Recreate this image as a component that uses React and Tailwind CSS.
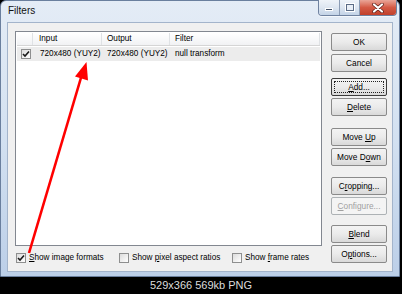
import React from "react";

function Btn({ children, disabled, focused, className = "" }) {
  return (
    <div
      className={
        "relative h-[18px] w-[56px] flex items-center justify-center rounded-[2px] border bg-gradient-to-b text-[8.3px] leading-none whitespace-nowrap " +
        (disabled
          ? "border-[#adb2b5] from-[#f4f4f4] to-[#f4f4f4] text-[#a0a0a0] "
          : focused
          ? "border-[#3a3a3a] from-[#f3f3f3] via-[#ebebeb] to-[#d9d9d9] text-black "
          : "border-[#8a8a8a] from-[#f3f3f3] via-[#ebebeb] to-[#d9d9d9] text-black ") +
        className
      }
    >
      {focused && (
        <div className="absolute inset-[2px] border border-dotted border-[#222]" />
      )}
      <span className="relative">{children}</span>
    </div>
  );
}

function Check({ checked }) {
  return (
    <div className="w-[10px] h-[10px] border border-[#8e8f8f] bg-gradient-to-br from-[#dcdcdc] to-white flex items-center justify-center shrink-0">
      {checked && (
        <svg width="8" height="8" viewBox="0 0 8 8">
          <path d="M1 4 L3 6 L7 1.5" fill="none" stroke="#1a1a1a" strokeWidth="1.6" />
        </svg>
      )}
    </div>
  );
}

export default function App() {
  return (
    <div className="relative w-[402px] h-[294px] bg-black overflow-hidden font-['Liberation_Sans',Arial,sans-serif]">
      {/* window */}
      <div className="w-[400px] h-[277px] flex flex-col rounded-t-[6px] border border-[#6a7f9e] bg-gradient-to-b from-[#e4ecf6] via-[#d3e1f1] to-[#bccfe8] px-[6px] pb-[4px]">
        {/* title bar */}
        <div className="h-[21px] flex items-start justify-between">
          <div className="pt-[5px] pl-[1px] text-[10px] leading-none text-[#111]">Filters</div>
          <div className="-mt-[1px] -mr-[4px] flex h-[16px] rounded-b-[4px] overflow-hidden border border-t-0 border-[#6f82a0] shadow-[0_1px_0_#f4f8fc]">
            <div className="w-[21px] h-full bg-gradient-to-b from-[#eef3f9] via-[#dde6f1] to-[#c3d3e7] border-r border-[#8b9cb5] flex items-end justify-center pb-[4px]">
              <div className="w-[8px] h-[3px] bg-[#3f4e66] border border-white" />
            </div>
            <div className="w-[20px] h-full bg-gradient-to-b from-[#eef3f9] via-[#dde6f1] to-[#c3d3e7] border-r border-[#8b9cb5] flex items-center justify-center">
              <div className="w-[8px] h-[7px] border border-[#5a6b85] bg-[#e8eef6] shadow-[0_0_0_1px_#ffffff]" />
            </div>
            <div className="w-[36px] h-full bg-gradient-to-b from-[#e9a598] via-[#d45a45] to-[#c0402b] flex items-center justify-center">
              <svg width="12" height="10" viewBox="0 0 12 10">
                <path d="M2 1.5 L10 8.5 M10 1.5 L2 8.5" stroke="#5a1f18" strokeWidth="3.6" strokeLinecap="round" />
                <path d="M2 1.5 L10 8.5 M10 1.5 L2 8.5" stroke="#ffffff" strokeWidth="2.2" strokeLinecap="round" />
              </svg>
            </div>
          </div>
        </div>
        {/* client */}
        <div className="flex-1 flex border border-[#a3b4cb] bg-[#f0f0f0] pl-[7px] pt-[8px] pr-[5px] text-[8.2px] leading-none text-black whitespace-nowrap">
          {/* left column */}
          <div className="w-[307px] flex flex-col">
            <div className="h-[215px] border border-[#828790] bg-white p-[1px] flex flex-col">
              {/* header */}
              <div className="h-[13px] flex border-b border-[#d5d5d5] bg-gradient-to-b from-white to-[#f1f2f4]">
                <div className="w-[16px] border-r border-[#dfe2e5]" />
                <div className="w-[69px] border-r border-[#dfe2e5] pl-[6px] flex items-center">Input</div>
                <div className="w-[68px] border-r border-[#dfe2e5] pl-[5px] flex items-center">Output</div>
                <div className="w-[150px] border-r border-[#dfe2e5] pl-[5px] flex items-center">Filter</div>
                <div className="flex-1" />
              </div>
              {/* row */}
              <div className="mt-[1px] h-[14px] flex items-center bg-[#ececec]">
                <div className="w-[16px] flex justify-center pl-[2px]">
                  <Check checked />
                </div>
                <div className="w-[69px] pl-[7px]">720x480 (YUY2)</div>
                <div className="w-[68px] pl-[5px]">720x480 (YUY2)</div>
                <div className="pl-[5px]">null transform</div>
              </div>
            </div>
            {/* checkbox row */}
            <div className="mt-[7px] flex items-center">
              <div className="w-[104px] flex items-center gap-[3px] pl-[1px]">
                <Check checked />
                <span>
                  <span className="underline">S</span>how image formats
                </span>
              </div>
              <div className="w-[113px] flex items-center gap-[3px]">
                <Check />
                <span>
                  Show <span className="underline">p</span>ixel aspect ratios
                </span>
              </div>
              <div className="flex items-center gap-[3px]">
                <Check />
                <span>
                  Show <span className="underline">f</span>rame rates
                </span>
              </div>
            </div>
          </div>
          {/* right column */}
          <div className="ml-[9px] pt-[2px] flex flex-col">
            <Btn>OK</Btn>
            <Btn className="mt-[3px]">Cancel</Btn>
            <Btn focused className="mt-[6px]">
              <span className="underline">A</span>dd...
            </Btn>
            <Btn className="mt-[2px]">
              <span className="underline">D</span>elete
            </Btn>
            <Btn className="mt-[12px]">
              Move <span className="underline">U</span>p
            </Btn>
            <Btn className="mt-[2px]">
              Move D<span className="underline">o</span>wn
            </Btn>
            <Btn className="mt-[11px]">
              C<span className="underline">r</span>opping...
            </Btn>
            <Btn disabled className="mt-[2px]">
              <span className="underline">C</span>onfigure...
            </Btn>
            <Btn className="mt-[10px]">
              <span className="underline">B</span>lend
            </Btn>
            <Btn className="mt-[2px]">
              O<span className="underline">p</span>tions...
            </Btn>
          </div>
        </div>
      </div>
      {/* caption */}
      <div className="h-[17px] flex items-center justify-center text-[11px] leading-none text-[#dcdcdc]">
        529x366 569kb PNG
      </div>
      {/* red arrow overlay */}
      <svg className="absolute left-0 top-0 pointer-events-none" width="402" height="294" viewBox="0 0 402 294">
        <line x1="29" y1="253" x2="81.5" y2="76" stroke="#ff0000" strokeWidth="2.6" />
        <polygon points="86.5,62 75,76.5 88,80.5" fill="#ff0000" />
      </svg>
    </div>
  );
}
